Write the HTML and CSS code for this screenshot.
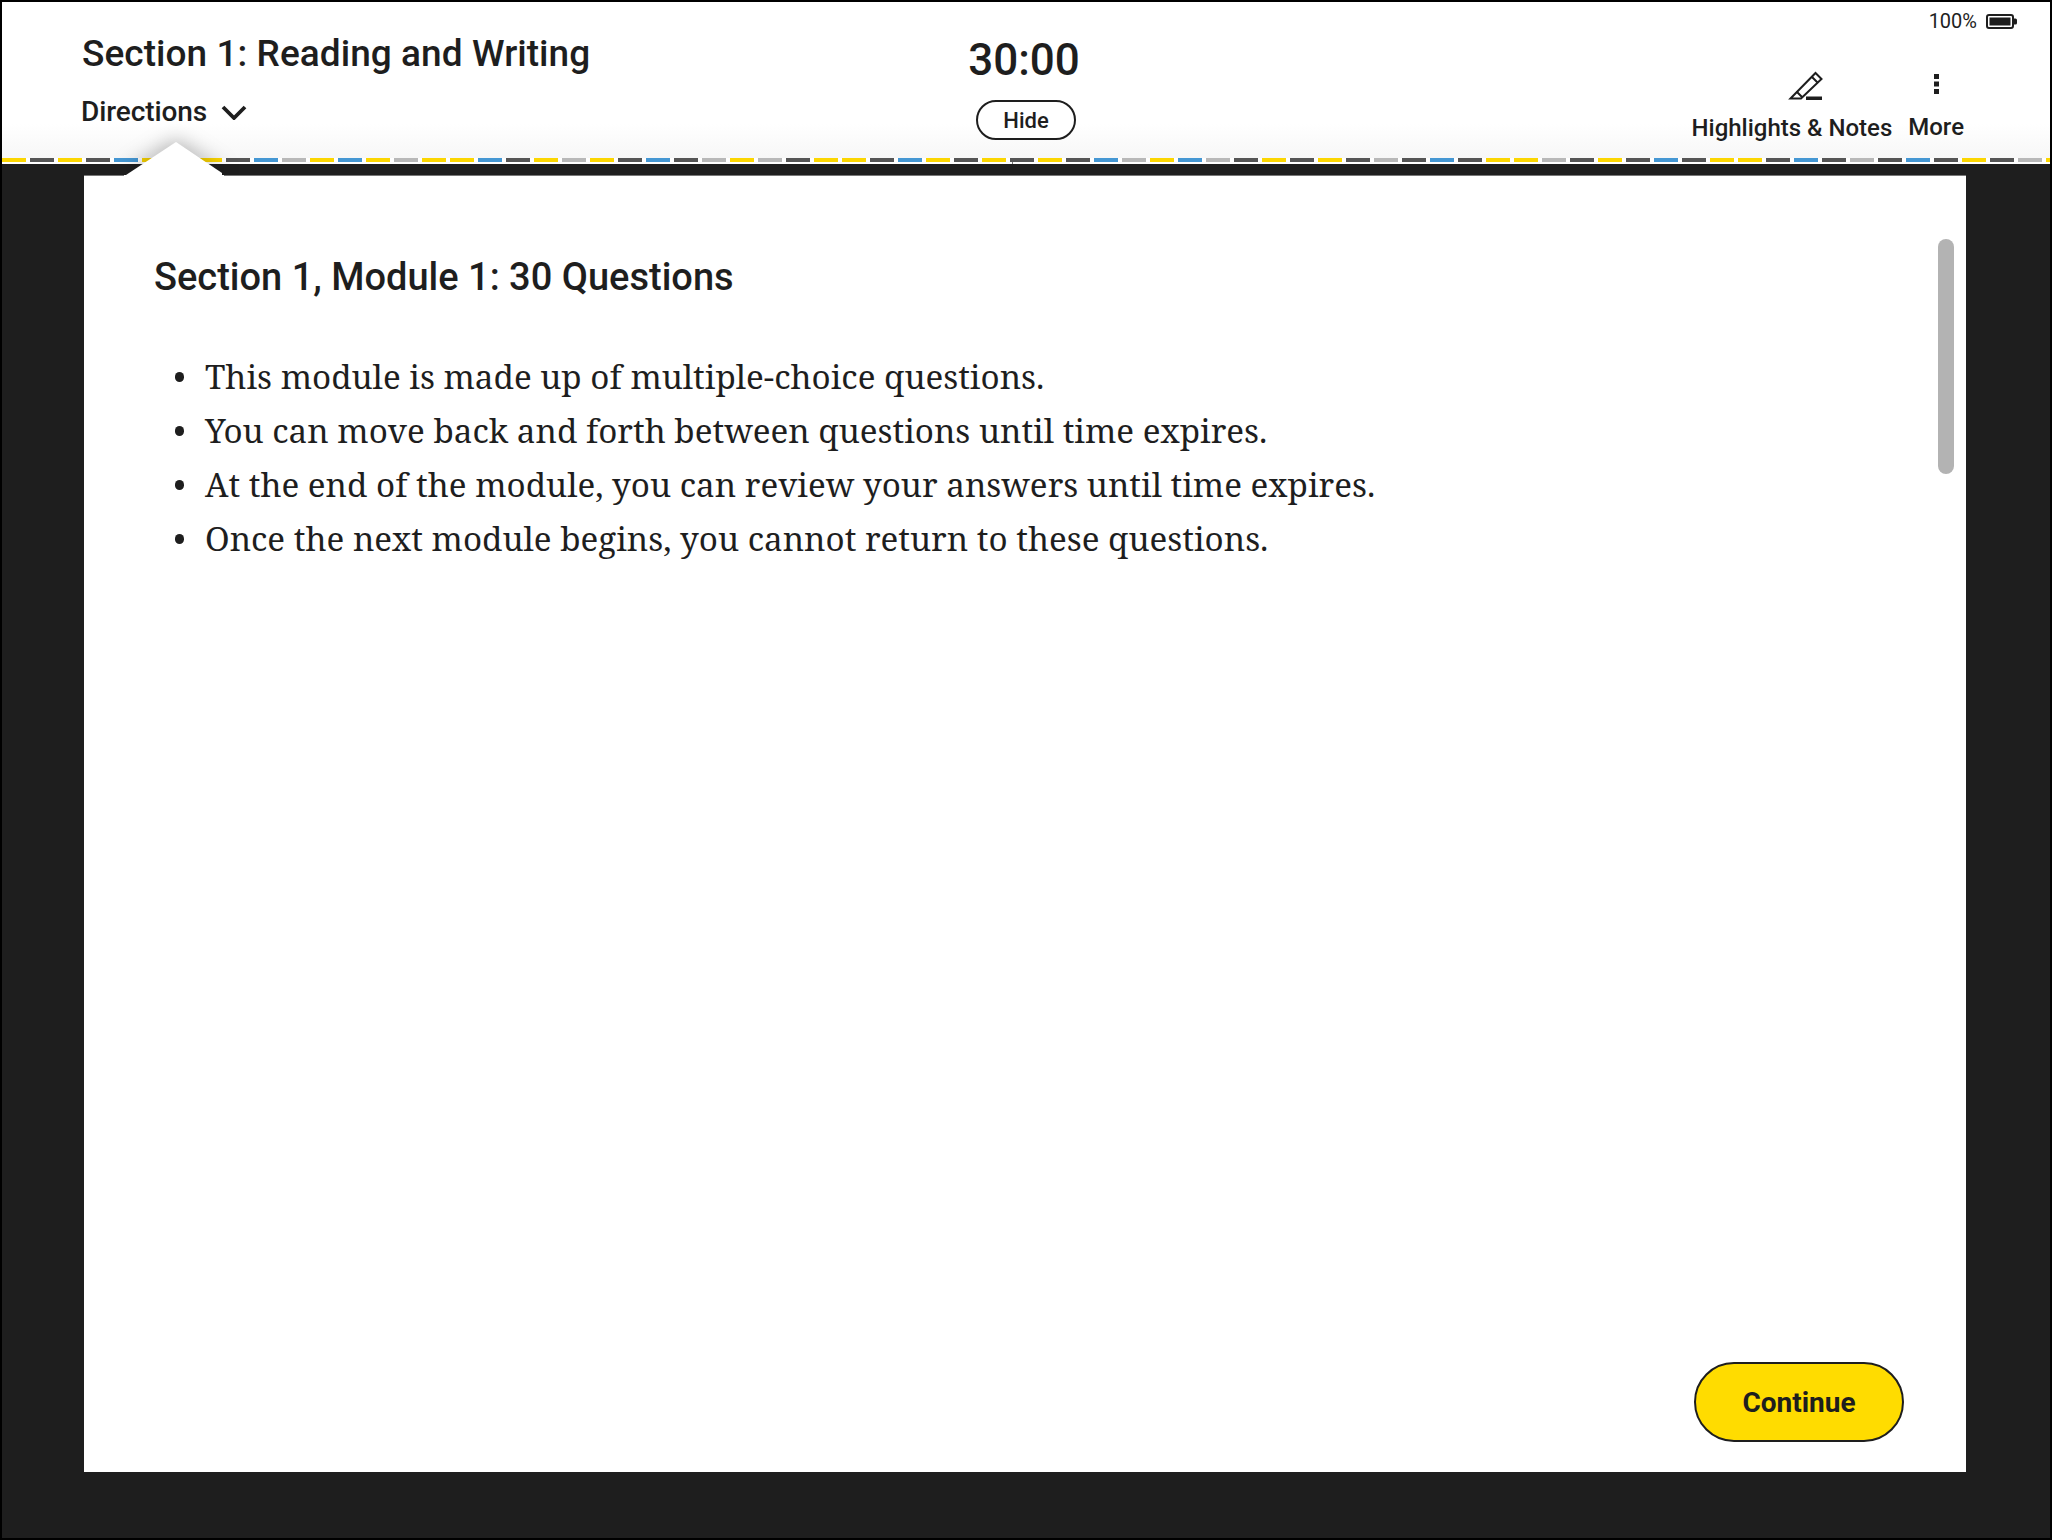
FILE: index.html
```html
<!DOCTYPE html>
<html lang="en">
<head>
<meta charset="utf-8">
<title>Section 1: Reading and Writing</title>
<link rel="stylesheet" href="styles.css">
</head>
<body>
<div class="app">
  <header class="topbar">
    <div class="left">
      <h1 class="section-title">Section 1: Reading and Writing</h1>
      <button class="directions">Directions
        <svg class="chev" viewBox="0 0 26 16" width="26" height="16"><path d="M2 3l11 11L24 3" fill="none" stroke="#1e1e1e" stroke-width="3.800"/></svg>
      </button>
    </div>
    <div class="center">
      <div class="timer">30:00</div>
      <button class="hide">Hide</button>
    </div>
    <div class="right">
      <div class="status">
        <span class="pct">100%</span>
        <svg class="battery" viewBox="0 0 31 15" width="31" height="15"><rect x="1" y="1" width="26" height="13" rx="2" fill="none" stroke="#1e1e1e" stroke-width="2"/><rect x="3.500" y="3.500" width="21" height="8" fill="#1e1e1e"/><path d="M28 4.500h1.500a1.500 1.500 0 0 1 1.500 1.500v3a1.500 1.500 0 0 1-1.500 1.500H28z" fill="#1e1e1e"/></svg>
      </div>
      <div class="tools">
        <div class="tool tool-notes">
          <svg class="pen" viewBox="0 0 36 30" width="36" height="30"><path d="M2.500 28.500L27.500 3 33.500 9 13 28.500z" fill="none" stroke="#1e1e1e" stroke-width="2" stroke-linejoin="miter"/><path d="M8.500 21.500l6 6M24 7l6 6" fill="none" stroke="#1e1e1e" stroke-width="2"/><rect x="18" y="26.500" width="16" height="3.500" fill="#1e1e1e"/></svg>
          <span class="tool-label">Highlights &amp; Notes</span>
        </div>
        <div class="tool tool-more">
          <svg class="kebab" viewBox="0 0 5 20" width="5" height="20"><rect width="5" height="5" fill="#1e1e1e"/><rect y="7.500" width="5" height="5" fill="#1e1e1e"/><rect y="15" width="5" height="5" fill="#1e1e1e"/></svg>
          <span class="tool-label">More</span>
        </div>
      </div>
    </div>
  </header>
  <div class="dashes">
    <i class="y"></i><i class="d"></i><i class="y"></i><i class="d"></i><i class="b"></i><i class="y"></i><i class="y"></i><i class="y"></i><i class="d"></i><i class="b"></i>
    <i class="g"></i><i class="y"></i><i class="b"></i><i class="y"></i><i class="g"></i><i class="y"></i><i class="y"></i><i class="b"></i><i class="d"></i><i class="y"></i>
    <i class="g"></i><i class="y"></i><i class="d"></i><i class="b"></i><i class="d"></i><i class="g"></i><i class="y"></i><i class="g"></i><i class="d"></i><i class="y"></i>
    <i class="y"></i><i class="d"></i><i class="b"></i><i class="y"></i><i class="d"></i><i class="y"></i><i class="d tick"></i><i class="y"></i><i class="d"></i><i class="b"></i>
    <i class="g"></i><i class="y"></i><i class="b"></i><i class="g"></i><i class="d"></i><i class="y"></i><i class="d"></i><i class="y"></i><i class="d"></i><i class="g"></i>
    <i class="d"></i><i class="b"></i><i class="d"></i><i class="y"></i><i class="y"></i><i class="g"></i><i class="d"></i><i class="y"></i><i class="d"></i><i class="b"></i>
    <i class="d"></i><i class="y"></i><i class="y"></i><i class="d"></i><i class="b"></i><i class="d"></i><i class="g"></i><i class="d"></i><i class="b"></i><i class="d"></i>
    <i class="y"></i><i class="d"></i><i class="g"></i><i class="y"></i>
  </div>
  <main class="stage">
    <div class="pointer-wrap"><div class="pointer"></div></div>
    <section class="panel">
      <h2 class="module-title">Section 1, Module 1: 30 Questions</h2>
      <ul class="rules">
        <li>This module is made up of multiple-choice questions.</li>
        <li>You can move back and forth between questions until time expires.</li>
        <li>At the end of the module, you can review your answers until time expires.</li>
        <li>Once the next module begins, you cannot return to these questions.</li>
      </ul>
      <button class="continue">Continue</button>
      <div class="scrollbar"></div>
    </section>
  </main>
</div>
</body>
</html>
```

FILE: styles.css
```css
* { box-sizing: border-box; }
html, body { margin: 0; padding: 0; }
body { width: 2052px; height: 1540px; overflow: hidden; font-family: Roboto, "Liberation Sans", sans-serif; color: #1e1e1e; }
button { font-family: inherit; color: inherit; background: none; border: 0; padding: 0; margin: 0; }
.app { width: 2052px; height: 1540px; border: 2px solid #000; display: flex; flex-direction: column; background: #1e1e1e; position: relative; }
.topbar { height: 156px; flex: none; background: linear-gradient(#fff 0, #fff 122px, #f7f7f7 156px); position: relative; padding-left: 80px; display: flex; justify-content: space-between; }
.left { width: 700px; padding-top: 28px; }
.section-title { margin: 0; font-size: 37px; line-height: 48px; font-weight: 500; letter-spacing: 0.05px; white-space: nowrap; }
.directions { display: flex; align-items: center; gap: 14px; margin-top: 16px; margin-left: -1px; font-size: 28px; line-height: 36px; font-weight: 500; letter-spacing: -0.1px; }
.center { position: absolute; left: 0; right: 0; top: 0; display: flex; flex-direction: column; align-items: center; pointer-events: none; padding-top: 32px; }
.timer { font-size: 44px; line-height: 52px; font-weight: 500; margin-right: 4px; }
.hide { width: 100px; height: 40px; margin-top: 14px; border: 2px solid #1e1e1e; border-radius: 20px; font-size: 22px; font-weight: 500; background: #fff; }
.right { padding-right: 33px; display: flex; flex-direction: column; align-items: flex-end; }
.status { display: flex; align-items: center; gap: 9px; height: 20px; margin-top: 9px; }
.pct { font-size: 20px; line-height: 20px; }
.tools { display: flex; gap: 16px; margin-top: 39px; margin-right: 53px; }
.tool { display: flex; flex-direction: column; align-items: center; }
.tool-notes .pen { margin-left: 28px; }
.tool-label { font-size: 24px; line-height: 32px; font-weight: 500; white-space: nowrap; }
.tool-notes .tool-label { margin-top: 12px; }
.tool-more .kebab { margin: 4px 0 17px; }
.dashes { height: 6px; flex: none; display: flex; gap: 4px; overflow: hidden; background: #fff; }
.dashes i { flex: none; width: 24px; height: 4px; display: block; position: relative; }
.y { background: #fcd600; }
.d { background: #555; }
.b { background: #4597d3; }
.g { background: #b8b8b8; }
.tick::after { content: ""; position: absolute; left: 2px; top: 4px; width: 1px; height: 2px; background: #777; }
.stage { flex: 1; min-height: 0; padding: 11px 84px 66px 82px; position: relative; }
.pointer-wrap { position: absolute; z-index: 1; left: 124px; top: -22px; width: 96px; height: 34px; filter: drop-shadow(0 -3px 10px rgba(0,0,0,.28)); }
.pointer { width: 96px; height: 34px; background: #fff; clip-path: polygon(50px 0, 96px 31px, 96px 34px, 0 34px, 0 33px); }
.panel { height: 100%; background: #fff; border-top: 1px solid #777; position: relative; z-index: 2; display: flex; flex-direction: column; padding: 77px 62px 30px 70px; }
.panel::before { content: ""; position: absolute; left: 40px; top: -1px; width: 100px; height: 1px; background: #fff; }
.module-title { margin: 0; font-size: 38px; line-height: 48px; font-weight: 500; }
.rules { margin: 49px 0 0; padding: 0 0 0 51px; list-style: none; font-family: "Noto Serif", "DejaVu Serif Condensed", serif; font-size: 33.200px; line-height: 54px; }
.rules li { display: flex; align-items: center; }
.rules li::before { content: ""; flex: none; width: 9.500px; height: 9.500px; margin: 0 21px 0 -30.500px; border-radius: 50%; background: #1e1e1e; }
.continue { margin-top: auto; align-self: flex-end; width: 210px; height: 80px; background: #ffdc00; border: 2px solid #1e1e1e; border-radius: 40px; font-size: 28px; font-weight: 700; }
.scrollbar { position: absolute; left: 1854px; top: 63px; width: 16px; height: 235px; border-radius: 8px; background: #b3b3b3; }
```
